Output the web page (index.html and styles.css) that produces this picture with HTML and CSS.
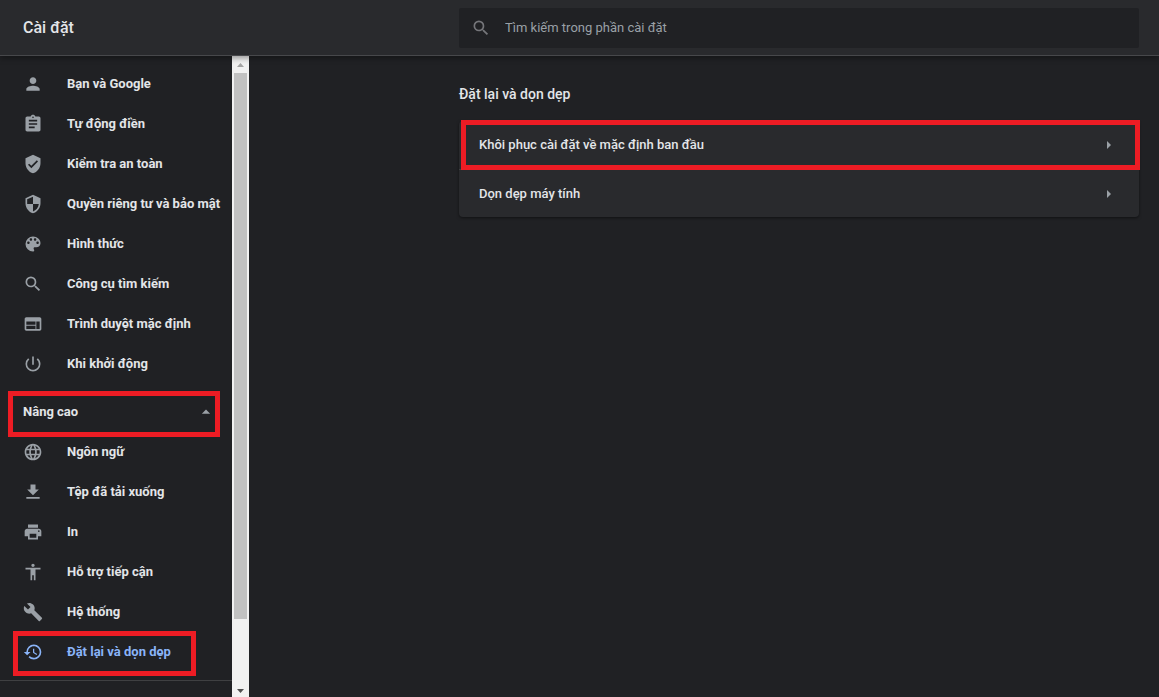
FILE: index.html
```html
<!DOCTYPE html>
<html lang="vi">
<head>
  <meta charset="UTF-8" />
  <meta name="viewport" content="width=device-width, initial-scale=1.0"/>
  <title>Cài đặt</title>
  <link rel="stylesheet" href="styles.css">
</head>
<body>
  <header class="toolbar">
    <h1>Cài đặt</h1>
    <label class="search">
      <svg class="icon" viewBox="0 0 24 24"><path d="M15.5 14h-.79l-.28-.27A6.47 6.47 0 0 0 16 9.5 6.5 6.5 0 1 0 9.5 16c1.61 0 3.09-.59 4.23-1.57l.27.28v.79l5 4.99L20.49 19l-4.99-5zm-6 0C7.01 14 5 11.99 5 9.5S7.01 5 9.5 5 14 7.01 14 9.5 11.99 14 9.5 14z"/></svg>
      <input type="search" placeholder="Tìm kiếm trong phần cài đặt" aria-label="Tìm kiếm trong phần cài đặt">
    </label>
  </header>

  <div class="container">
    <aside class="sidebar">
      <nav class="menu">
        <a class="item" href="#people">
          <svg class="icon" viewBox="0 0 24 24"><path d="M12 12c2.21 0 4-1.79 4-4s-1.79-4-4-4-4 1.79-4 4 1.79 4 4 4zm0 2c-2.67 0-8 1.34-8 4v2h16v-2c0-2.66-5.33-4-8-4z"/></svg>
          Bạn và Google
        </a>
        <a class="item" href="#autofill">
          <svg class="icon" viewBox="0 0 24 24"><path d="M19 3h-4.18C14.4 1.84 13.3 1 12 1c-1.3 0-2.4.84-2.82 2H5c-1.1 0-2 .9-2 2v14c0 1.1.9 2 2 2h14c1.1 0 2-.9 2-2V5c0-1.1-.9-2-2-2zm-7 0c.55 0 1 .45 1 1s-.45 1-1 1-1-.45-1-1 .45-1 1-1zm2 14H7v-2h7v2zm3-4H7v-2h10v2zm0-4H7V7h10v2z"/></svg>
          Tự động điền
        </a>
        <a class="item" href="#safety">
          <svg class="icon" viewBox="0 0 24 24"><path d="M12 1L3 5v6c0 5.55 3.84 10.74 9 12 5.16-1.26 9-6.45 9-12V5l-9-4zm-2 16l-4-4 1.41-1.41L10 14.17l6.59-6.59L18 9l-8 8z"/></svg>
          Kiểm tra an toàn
        </a>
        <a class="item" href="#privacy">
          <svg class="icon" viewBox="0 0 24 24"><path d="M12 1L3 5v6c0 5.55 3.84 10.74 9 12 5.16-1.26 9-6.45 9-12V5l-9-4zm0 10.99h7c-.53 4.12-3.28 7.79-7 8.94V12H5V6.3l7-3.11v8.8z"/></svg>
          Quyền riêng tư và bảo mật
        </a>
        <a class="item" href="#appearance">
          <svg class="icon" viewBox="0 0 24 24"><path d="M12 3a9 9 0 0 0 0 18c.83 0 1.5-.67 1.5-1.5 0-.39-.15-.74-.39-1.01-.23-.26-.38-.61-.38-.99 0-.83.67-1.5 1.5-1.5H16c2.76 0 5-2.24 5-5 0-4.42-4.03-8-9-8zm-5.5 9c-.83 0-1.5-.67-1.5-1.5S5.67 9 6.5 9 8 9.67 8 10.5 7.33 12 6.5 12zm3-4C8.67 8 8 7.33 8 6.5S8.67 5 9.5 5s1.5.67 1.5 1.5S10.33 8 9.5 8zm5 0c-.83 0-1.5-.67-1.5-1.5S13.67 5 14.5 5s1.5.67 1.5 1.5S15.33 8 14.5 8zm3 4c-.83 0-1.5-.67-1.5-1.5S16.67 9 17.5 9s1.5.67 1.5 1.5-.67 1.5-1.5 1.5z"/></svg>
          Hình thức
        </a>
        <a class="item" href="#search">
          <svg class="icon" viewBox="0 0 24 24"><path d="M15.5 14h-.79l-.28-.27A6.47 6.47 0 0 0 16 9.5 6.5 6.5 0 1 0 9.5 16c1.61 0 3.09-.59 4.23-1.57l.27.28v.79l5 4.99L20.49 19l-4.99-5zm-6 0C7.01 14 5 11.99 5 9.5S7.01 5 9.5 5 14 7.01 14 9.5 11.99 14 9.5 14z"/></svg>
          Công cụ tìm kiếm
        </a>
        <a class="item" href="#browser">
          <svg class="icon" viewBox="0 0 24 24"><path d="M20 4H4c-1.1 0-1.99.9-1.99 2L2 18c0 1.1.9 2 2 2h16c1.1 0 2-.9 2-2V6c0-1.1-.9-2-2-2zm-5 14H4v-4h11v4zm0-5H4V9h11v4zm5 5h-4V9h4v9z"/></svg>
          Trình duyệt mặc định
        </a>
        <a class="item" href="#startup">
          <svg class="icon" viewBox="0 0 24 24"><path d="M13 3h-2v10h2V3zm4.83 2.17l-1.42 1.42A6.92 6.92 0 0 1 19 12c0 3.87-3.13 7-7 7s-7-3.13-7-7c0-2.19 1.01-4.14 2.58-5.42L6.17 5.17A8.93 8.93 0 0 0 3 12a9 9 0 0 0 18 0c0-2.74-1.23-5.18-3.17-6.83z"/></svg>
          Khi khởi động
        </a>

        <button class="advanced" type="button" aria-expanded="true">
          Nâng cao
          <svg class="icon" viewBox="0 0 24 24"><path d="M7 14l5-5 5 5z"/></svg>
        </button>

        <a class="item" href="#languages">
          <svg class="icon" viewBox="0 0 24 24"><path d="M11.99 2C6.47 2 2 6.48 2 12s4.47 10 9.99 10C17.52 22 22 17.52 22 12S17.52 2 11.99 2zm6.93 6h-2.95a15.65 15.65 0 0 0-1.38-3.56A8.03 8.03 0 0 1 18.92 8zM12 4.04c.83 1.2 1.48 2.53 1.91 3.96h-3.82c.43-1.43 1.08-2.76 1.91-3.96zM4.26 14C4.1 13.36 4 12.69 4 12s.1-1.36.26-2h3.38c-.08.66-.14 1.32-.14 2s.06 1.34.14 2H4.26zm.82 2h2.95c.32 1.25.78 2.45 1.38 3.56A7.99 7.99 0 0 1 5.08 16zm2.95-8H5.08a7.99 7.99 0 0 1 4.33-3.56A15.65 15.65 0 0 0 8.03 8zM12 19.96c-.83-1.2-1.48-2.53-1.91-3.96h3.82c-.43 1.43-1.08 2.76-1.91 3.96zM14.34 14H9.66c-.09-.66-.16-1.32-.16-2s.07-1.35.16-2h4.68c.09.65.16 1.32.16 2s-.07 1.34-.16 2zm.25 5.56c.6-1.11 1.06-2.31 1.38-3.56h2.95a8.03 8.03 0 0 1-4.33 3.56zM16.36 14c.08-.66.14-1.32.14-2s-.06-1.34-.14-2h3.38c.16.64.26 1.31.26 2s-.1 1.36-.26 2h-3.38z"/></svg>
          Ngôn ngữ
        </a>
        <a class="item" href="#downloads">
          <svg class="icon" viewBox="0 0 24 24"><path d="M19 9h-4V3H9v6H5l7 7 7-7zM4 18v2h16v-2H4z"/></svg>
          Tệp đã tải xuống
        </a>
        <a class="item" href="#printing">
          <svg class="icon" viewBox="0 0 24 24"><path d="M19 8H5c-1.66 0-3 1.34-3 3v6h4v4h12v-4h4v-6c0-1.66-1.34-3-3-3zm-3 11H8v-5h8v5zm3-7c-.55 0-1-.45-1-1s.45-1 1-1 1 .45 1 1-.45 1-1 1zm-1-9H6v4h12V3z"/></svg>
          In
        </a>
        <a class="item" href="#accessibility">
          <svg class="icon" viewBox="0 0 24 24"><path d="M12 2c1.1 0 2 .9 2 2s-.9 2-2 2-2-.9-2-2 .9-2 2-2zm9 7h-6v13h-2v-6h-2v6H9V9H3V7h18v2z"/></svg>
          Hỗ trợ tiếp cận
        </a>
        <a class="item" href="#system">
          <svg class="icon" viewBox="0 0 24 24"><path d="M22.7 19l-9.1-9.1c.9-2.3.4-5-1.5-6.900-2-2-5-2.4-7.4-1.3L9 6 6 9 1.6 4.7C.4 7.1.9 10.1 2.9 12.1c1.9 1.9 4.6 2.4 6.9 1.5l9.1 9.1c.4.4 1 .4 1.4 0l2.3-2.3c.5-.4.5-1.1.1-1.4z"/></svg>
          Hệ thống
        </a>
        <a class="item active" href="#reset" aria-current="page">
          <svg class="icon" viewBox="0 0 24 24"><path d="M13 3a9 9 0 0 0-9 9H1l3.89 3.89.07.14L9 12H6c0-3.87 3.13-7 7-7s7 3.13 7 7-3.13 7-7 7c-1.93 0-3.68-.79-4.94-2.06l-1.42 1.42A8.95 8.95 0 0 0 13 21a9 9 0 0 0 0-18zm-1 5v5l4.28 2.54.72-1.21-3.5-2.08V8H12z"/></svg>
          Đặt lại và dọn dẹp
        </a>
        <hr>
      </nav>
      <div class="scrollbar" aria-hidden="true">
        <svg class="arrow up" viewBox="0 0 17 17"><path d="M5 11h7L8.5 7z"/></svg>
        <div class="track"><div class="thumb"></div></div>
        <svg class="arrow down" viewBox="0 0 17 17"><path d="M5 9h7l-3.5 4z"/></svg>
      </div>
    </aside>

    <main class="content">
      <section class="section">
        <h2>Đặt lại và dọn dẹp</h2>
        <div class="card">
          <button class="row marked" type="button">
            Khôi phục cài đặt về mặc định ban đầu
            <svg class="icon" viewBox="0 0 20 20"><path d="M8 6v8l4-4z"/></svg>
          </button>
          <button class="row" type="button">
            Dọn dẹp máy tính
            <svg class="icon" viewBox="0 0 20 20"><path d="M8 6v8l4-4z"/></svg>
          </button>
        </div>
      </section>
    </main>
  </div>
</body>
</html>
```

FILE: styles.css
```css
:root {
  --bg: #202124;
  --surface: #292a2d;
  --line: #3f4042;
  --text: #e3e5e8;
  --muted: #9aa0a6;
  --link: #8ab4f8;
  --mark: #ed1c24;
}

* {
  box-sizing: border-box;
}

body {
  margin: 0;
  height: 100vh;
  display: flex;
  flex-direction: column;
  overflow: hidden;
  background: var(--bg);
  color: var(--text);
  font-family: Roboto, "Liberation Sans", sans-serif;
  font-size: 13px;
  line-height: 20px;
}

button,
input {
  font: inherit;
  color: inherit;
  border: none;
  background: none;
}

button {
  cursor: pointer;
  text-align: left;
}

.icon {
  width: 20px;
  height: 20px;
  flex: none;
  fill: var(--muted);
}

/* top bar */
.toolbar {
  position: relative;
  z-index: 1;
  display: flex;
  align-items: center;
  flex: none;
  height: 56px;
  padding: 0 20px 0 23px;
  background: var(--surface);
  border-bottom: 1px solid #47484b;
  box-shadow: 0 2px 6px rgba(0, 0, 0, 0.4);
}

.toolbar h1 {
  margin: 0;
  flex: 1;
  font-size: 16px;
  font-weight: 500;
}

.search {
  display: flex;
  align-items: center;
  gap: 14px;
  flex: 0 1 680px;
  height: 40px;
  padding: 0 12px;
  background: var(--bg);
  border-radius: 2px;
}

.search .icon {
  fill: #75767a;
}

.search input {
  flex: 1;
  min-width: 0;
  padding: 0;
  outline: none;
}

.search input::placeholder {
  color: var(--muted);
  opacity: 1;
}

.container {
  display: flex;
  flex: 1;
  min-height: 0;
}

/* left menu */
.sidebar {
  display: flex;
  flex: none;
}

.menu {
  width: 232px;
  padding-top: 8px;
  overflow: hidden;
}

.item,
.advanced {
  position: relative;
  display: flex;
  align-items: center;
  height: 40px;
  padding: 0 0 0 23px;
  font-weight: 700;
  color: var(--text);
  white-space: nowrap;
  text-decoration: none;
}

.item {
  gap: 24px;
}

.item.active {
  color: var(--link);
}

.item.active .icon {
  fill: var(--link);
}

.advanced {
  justify-content: space-between;
  width: 100%;
  margin-top: 8px;
  padding-right: 16px;
}

.menu hr {
  margin: 8px 0;
  border: none;
  border-top: 1px solid var(--line);
}

/* red frames */
.advanced::after,
.item.active::after,
.marked::after {
  content: "";
  position: absolute;
  border: 5px solid var(--mark);
  pointer-events: none;
}

.advanced::after {
  inset: -1px 12px -5px 8px;
}

.item.active::after {
  inset: -1px 36px -4px 13px;
}

.marked::after {
  inset: -1px -1px -1px 2px;
}

.scrollbar {
  display: flex;
  flex-direction: column;
  width: 17px;
  background: #f1f1f1;
}

.arrow {
  width: 17px;
  height: 17px;
  flex: none;
  fill: #a3a3a3;
}

.arrow.down {
  fill: #505050;
}

.track {
  flex: 1;
  padding: 0 2px;
}

.thumb {
  height: 90%;
  background: #c1c1c1;
}

/* right side */
.content {
  flex: 1;
  min-width: 0;
  padding: 28px 20px 0;
}

.section {
  max-width: 680px;
  margin-left: auto;
}

.section h2 {
  margin: 0 0 17px;
  font-size: 14px;
  font-weight: 500;
}

.card {
  background: var(--surface);
  border-radius: 4px;
  box-shadow: 0 1px 3px rgba(0, 0, 0, 0.5);
}

.row {
  position: relative;
  display: flex;
  align-items: center;
  justify-content: space-between;
  width: 100%;
  height: 48px;
  padding: 0 20px;
  font-weight: 500;
}

.row + .row {
  border-top: 1px solid var(--line);
}

.row.marked {
  z-index: 1;
}
```
